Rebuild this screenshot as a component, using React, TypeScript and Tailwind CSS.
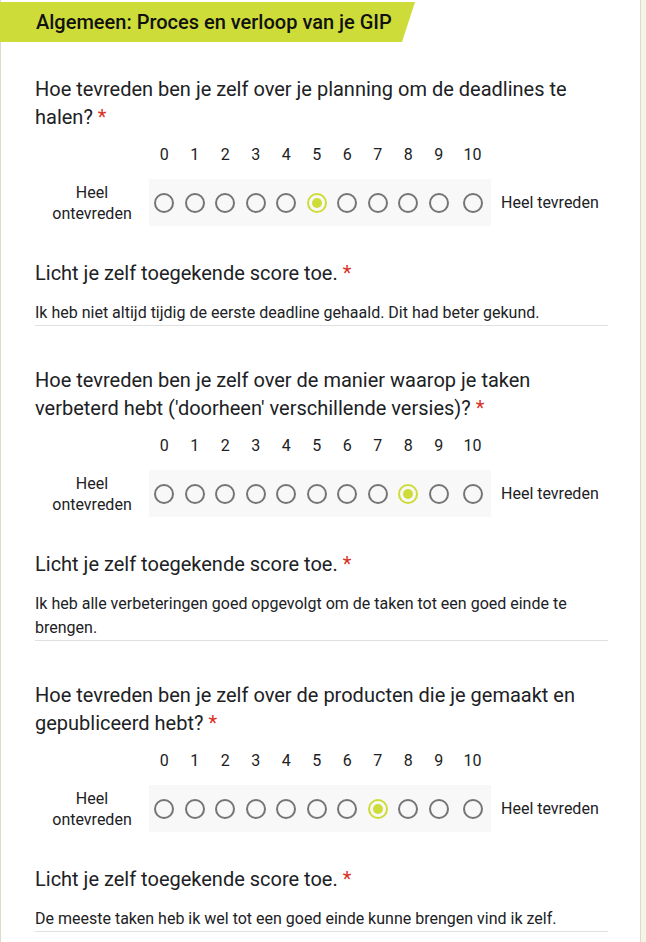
import React from 'react';

interface Question {
    title: string;
    value: number;
    answer: string;
}

const questions: Question[] = [
    {
        title: 'Hoe tevreden ben je zelf over je planning om de deadlines te halen?',
        value: 5,
        answer: 'Ik heb niet altijd tijdig de eerste deadline gehaald. Dit had beter gekund.',
    },
    {
        title: "Hoe tevreden ben je zelf over de manier waarop je taken verbeterd hebt ('doorheen' verschillende versies)?",
        value: 8,
        answer: 'Ik heb alle verbeteringen goed opgevolgt om de taken tot een goed einde te brengen.',
    },
    {
        title: 'Hoe tevreden ben je zelf over de producten die je gemaakt en gepubliceerd hebt?',
        value: 7,
        answer: 'De meeste taken heb ik wel tot een goed einde kunne brengen vind ik zelf.',
    },
];

const scale = Array.from({ length: 11 }, (_, i) => i);

function Radio({ checked }: { checked: boolean }) {
    return (
        <span
            className={`flex h-[20px] w-[20px] items-center justify-center rounded-full border-2 ${checked ? 'border-[#cddc39]' : 'border-[#757575]'}`}
        >
            {checked && <span className="h-[10px] w-[10px] rounded-full bg-[#cddc39]" />}
        </span>
    );
}

function ScaleQuestion({ q }: { q: Question }) {
    return (
        <div>
            <div className="text-[20px] leading-[28px] text-[#202124]">
                {q.title} <span className="text-[#d93025]">*</span>
            </div>

            {/* scale */}
            <div className="mt-[10px] flex">
                <div className="w-[114px]" />
                {scale.map(n => (
                    <div
                        key={n}
                        className={`${n === 10 ? 'w-[37px]' : 'w-[30.5px]'} flex h-[28px] items-center justify-center text-[16px] text-[#202124]`}
                    >
                        {n}
                    </div>
                ))}
            </div>
            <div className="mt-[10px] flex h-[47px] items-center">
                <div className="w-[114px] text-center text-[16px] leading-[21px] text-[#202124]">
                    Heel<br />ontevreden
                </div>
                <div className="flex h-full items-center bg-[#f8f8f8]">
                    {scale.map(n => (
                        <div
                            key={n}
                            className={`${n === 10 ? 'w-[37px]' : 'w-[30.5px]'} flex justify-center`}
                        >
                            <Radio checked={n === q.value} />
                        </div>
                    ))}
                </div>
                <div className="pl-[10px] text-[16px] text-[#202124]">Heel tevreden</div>
            </div>

            {/* explanation */}
            <div className="mt-[33px] text-[20px] leading-[28px] text-[#202124]">
                Licht je zelf toegekende score toe. <span className="text-[#d93025]">*</span>
            </div>
            <div className="mt-[14px] border-b border-[#e0e0e0] text-[16px] leading-[24px] text-[#202124]">
                {q.answer}
            </div>
        </div>
    );
}

export default function App() {
    return (
        <div className="flex min-h-[942px] bg-[#f5f5e6] font-['Roboto',_'Liberation_Sans',_sans-serif]">
            <div className="w-[641px] border-x border-[#dcdccc] bg-white pb-[10px]">
                <div className="mt-[2px] ml-[-1px] flex h-[40px] w-[415px] items-center bg-[#cddc39] pl-[36px] text-[20px] font-medium text-[#111] [clip-path:polygon(0_0,100%_0,calc(100%-13px)_100%,0_100%)]">
                    Algemeen: Proces en verloop van je GIP
                </div>
                <div className="mt-[33px] flex w-[607px] flex-col gap-[40px] pl-[34px]">
                    {questions.map((q, i) => (
                        <ScaleQuestion key={i} q={q} />
                    ))}
                </div>
            </div>
        </div>
    );
}
